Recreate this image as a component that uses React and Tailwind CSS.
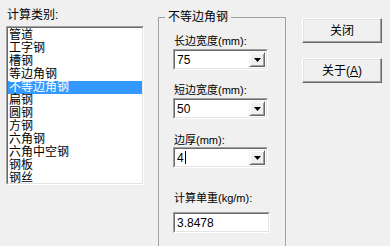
import React from "react";

const FONT = { fontFamily: '"Liberation Sans", "Noto Sans CJK SC", sans-serif' };

const items = ["管道", "工字钢", "槽钢", "等边角钢", "不等边角钢", "扁钢", "圆钢", "方钢", "六角钢", "六角中空钢", "钢板", "钢丝"];

function Sunken({ className = "", children }) {
  return (
    <div className={`border-t border-l border-t-[#a0a0a0] border-l-[#a0a0a0] border-b border-r border-b-white border-r-white ${className}`}>
      <div className="h-full border-t border-l border-t-[#696969] border-l-[#696969] border-b border-r border-b-[#e3e3e3] border-r-[#e3e3e3] bg-white">
        {children}
      </div>
    </div>
  );
}

function Combo({ value, caret }) {
  return (
    <Sunken className="w-[95px] h-[21px]">
      <div className="flex h-full items-center">
        <div className="flex-1 pl-[2px] text-[12px] leading-[14px] text-black flex items-center">
          {value}
          {caret && <span className="inline-block w-px h-[13px] bg-black ml-px" />}
        </div>
        <div className="w-[16px] h-[15px] mr-px flex items-center justify-center bg-[#f0f0f0] border-t border-l border-t-[#f0f0f0] border-l-[#f0f0f0] border-b border-r border-b-[#696969] border-r-[#696969] shadow-[inset_1px_1px_0_#ffffff,inset_-1px_-1px_0_#a0a0a0]">
          <svg width="7" height="4" viewBox="0 0 7 4"><path d="M0 0H7L3.5 4Z" fill="#000" /></svg>
        </div>
      </div>
    </Sunken>
  );
}

function Button({ children }) {
  return (
    <div className="w-[80px] h-[25px] bg-[#f0f0f0] border-t border-l border-t-white border-l-white border-b border-r border-b-[#696969] border-r-[#696969] shadow-[inset_-1px_-1px_0_#a0a0a0,inset_1px_1px_0_#e3e3e3] flex items-center justify-center text-[12px] text-black">
      {children}
    </div>
  );
}

export default function App() {
  return (
    <div className="w-[390px] h-[246px] overflow-hidden bg-[#f0f0f0] flex flex-col" style={FONT}>
      <div className="h-[2px] bg-gradient-to-r from-[#6a8cc4] to-[#5b7fb9]" />
      <div className="flex flex-1">
        <div className="w-[158px] pl-[6px] pt-[8px] flex flex-col">
          <div className="text-[12px] leading-[14px] text-black mb-[4px] pl-px">计算类别:</div>
          <Sunken className="w-[138px] h-[159px]">
            <div className="h-full overflow-hidden pt-[1px]">
              {items.map((it) => (
                <div
                  key={it}
                  className={`h-[13px] text-[12px] leading-[13px] pl-px whitespace-nowrap ${it === "不等边角钢" ? "bg-[#3399ff] text-white" : "text-black"}`}
                >
                  {it}
                </div>
              ))}
            </div>
          </Sunken>
        </div>
        <div className="relative w-[128px] mt-[17px] h-[260px] border-t border-l border-r border-[#a0a0a0]">
          <div className="absolute left-[6px] top-[-8px] px-[3px] bg-[#f0f0f0] text-[12px] leading-[14px] text-black">不等边角钢</div>
          <div className="pl-[14px] pt-[16px] flex flex-col text-[11px] leading-[14px] text-black">
            <div className="pl-px">长边宽度(mm):</div>
            <div className="mt-[1px]"><Combo value="75" /></div>
            <div className="mt-[13px] pl-px">短边宽度(mm):</div>
            <div className="mt-[1px]"><Combo value="50" /></div>
            <div className="mt-[14px] pl-px">边厚(mm):</div>
            <div className="mt-[0px]"><Combo value="4" caret /></div>
            <div className="mt-[23px] pl-px">计算单重(kg/m):</div>
            <div className="mt-[7px]">
              <Sunken className="w-[97px] h-[21px]">
                <div className="h-full flex items-center pl-[2px] text-[12px]">3.8478</div>
              </Sunken>
            </div>
          </div>
        </div>
        <div className="flex-1 pl-[16px] pt-[18px] flex flex-col gap-[15px]">
          <Button>关闭</Button>
          <Button>关于(<span className="underline">A</span>)</Button>
        </div>
      </div>
    </div>
  );
}
